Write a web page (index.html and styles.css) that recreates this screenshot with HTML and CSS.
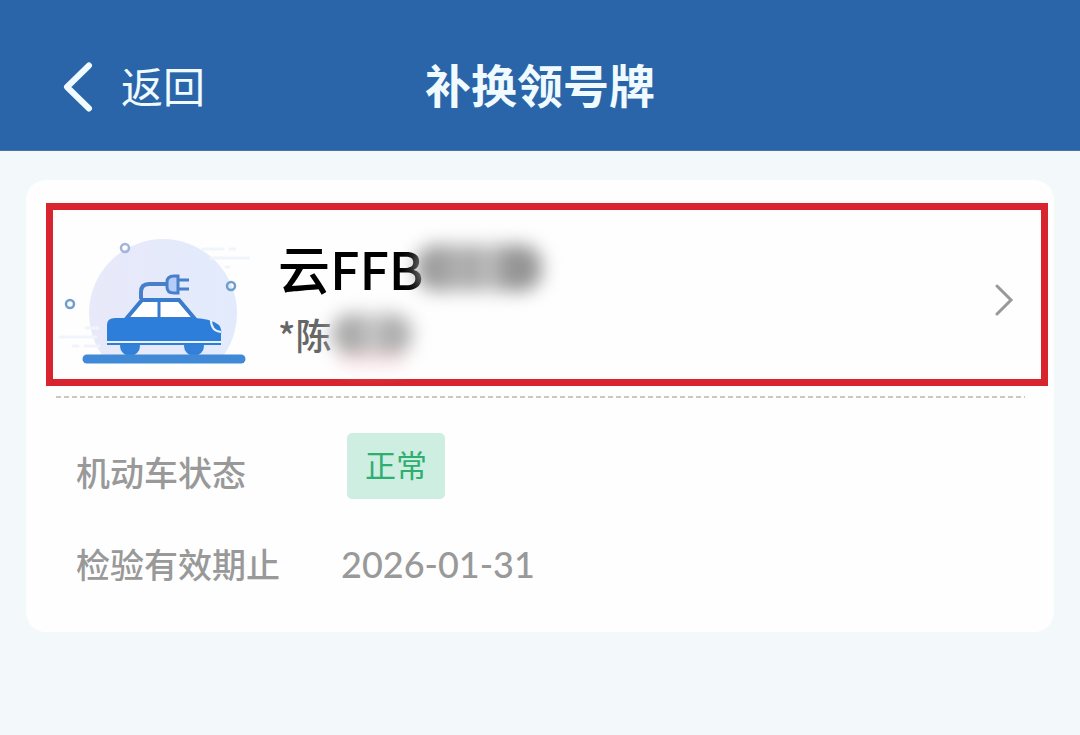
FILE: index.html
```
<!DOCTYPE html>
<html lang="zh-CN">
<head>
    <meta charset="utf-8">
    <meta name="viewport" content="width=device-width, initial-scale=1">
    <title>补换领号牌</title>
    <link rel="stylesheet" href="styles.css">
</head>
<body>
    <header class="topbar">
        <button type="button" class="back">
            <svg width="30" height="50" viewBox="0 0 30 50" aria-hidden="true">
                <path d="M26 3.500L4 25l22 21.500" fill="none" stroke="currentColor" stroke-width="6" stroke-linecap="round" stroke-linejoin="round"/>
            </svg>
            <span>返回</span>
        </button>
        <h1>补换领号牌</h1>
    </header>

    <main class="card">
        <button type="button" class="vehicle">
            <svg class="car" width="194" height="142" viewBox="0 0 194 142" aria-hidden="true">
                <defs>
                    <linearGradient id="sky" x1="0" x2="1">
                        <stop offset="0" stop-color="#e8e9f9"/>
                        <stop offset="1" stop-color="#e2ebfc"/>
                    </linearGradient>
                </defs>
                <path d="M46 132A74 74 0 1 1 168 132z" fill="url(#sky)"/>
                <g stroke="#f0f4fb" stroke-width="3" stroke-linecap="round">
                    <path d="M147 26h20M174 26h5M155 35h38M170 44h3M30 105h12M4 114h36M17 123h5M29 123h14"/>
                </g>
                <g fill="none" stroke-width="2.500">
                    <circle cx="69" cy="25" r="4" stroke="#a3b4dc"/>
                    <circle cx="175" cy="63" r="4" stroke="#6f9fcb"/>
                    <circle cx="14" cy="81" r="4" stroke="#6f9fcb"/>
                </g>
                <path d="M85 76V69q0-8 8-8h19" fill="none" stroke="#497fc9" stroke-width="4"/>
                <path d="M122 57h11M122 66h11" stroke="#497fc9" stroke-width="3"/>
                <path d="M122 53v17h-4q-7 0-7-6v-5q0-6 7-6z" fill="#b3ccfa" stroke="#497fc9" stroke-width="3"/>
                <path d="M70 96L86 77h37l16 19z" fill="#fff" stroke="#397bcd" stroke-width="4"/>
                <path d="M103 77v19" stroke="#397bcd" stroke-width="3"/>
                <circle cx="74" cy="123" r="10" fill="#3380d8"/>
                <circle cx="138" cy="123" r="10" fill="#3380d8"/>
                <path d="M51 122v-20q0-7 8-7h77q18 0 27 7 3 4 2 10v10z" fill="#2d7ddb"/>
                <path d="M51 119h114" stroke="#e9f2ff" stroke-width="2"/>
                <path d="M155 97q0 11 10 12" fill="none" stroke="#e9f2ff" stroke-width="2"/>
                <path d="M31 136h154" stroke="#4089d6" stroke-width="9" stroke-linecap="round"/>
            </svg>
            <span class="info">
                <span class="plate">云FFB<i class="mask"></i></span>
                <span class="owner">*陈<i class="mask"></i></span>
            </span>
            <svg class="arrow" width="20" height="32" viewBox="0 0 20 32" aria-hidden="true">
                <path d="M3 2l14 14L3 30" fill="none" stroke="currentColor" stroke-width="3" stroke-linecap="round"/>
            </svg>
        </button>

        <svg class="divider" width="100%" height="2" aria-hidden="true">
            <line x1="0" y1="1" x2="100%" y2="1" stroke="#cfc6bd" stroke-width="2" stroke-dasharray="5 3"/>
        </svg>

        <dl class="details">
            <dt>机动车状态</dt>
            <dd><span class="badge">正常</span></dd>
            <dt>检验有效期止</dt>
            <dd class="date">2026-01-31</dd>
        </dl>
    </main>
</body>
</html>
```
FILE: styles.css
```
* {
    box-sizing: border-box;
}

body {
    margin: 0;
    background: #f3f8fb;
    font-family: "Noto Sans CJK SC", sans-serif;
    font-weight: 500;
}

button {
    padding: 0;
    border: 0;
    background: none;
    font-family: inherit;
    font-weight: inherit;
    text-align: left;
    cursor: pointer;
}

.topbar {
    display: grid;
    grid-template-columns: 1fr auto 1fr;
    align-items: center;
    height: 151px;
    padding: 24px 63px 0;
    background: #2b65a9;
    border-bottom: 1px solid #4f7297;
    color: #f0fbff;
}

.back {
    display: flex;
    align-items: center;
    gap: 28px;
    color: inherit;
    font-size: 42px;
    font-weight: 400;
    line-height: 46px;
}

.back span {
    padding-bottom: 4px;
}

.topbar h1 {
    margin: 0;
    padding-bottom: 8px;
    font-size: 46px;
    line-height: 50px;
    font-weight: 700;
}

.card {
    margin: 29px 26px;
    padding: 23px 6px 35px 20px;
    border-radius: 20px;
    background: #fefefe;
}

.vehicle {
    display: flex;
    align-items: center;
    width: 100%;
    padding: 13px 27px 3px 3px;
    border: 7px solid #d7242e;
}

.car {
    flex: none;
    align-self: flex-start;
}

.info {
    display: flex;
    flex: 1;
    flex-direction: column;
    margin-left: 28px;
    padding: 10px 0 11px;
}

.plate,
.owner {
    display: flex;
    align-items: center;
}

.plate {
    color: #000;
    font-size: 52px;
    line-height: 70px;
}

.owner {
    color: #666;
    font-size: 36px;
    line-height: 62px;
}

/* hides the rest of the number and the name */
.mask {
    border-radius: 20px;
    filter: blur(9px);
}

.plate .mask {
    width: 126px;
    height: 46px;
    margin-left: -8px;
    background: linear-gradient(90deg, #999, #a3a3a3 25%, #b8b8b8 33%, #a3a3a3 45%, #c4c4c4 57%, #929292 75%, #999);
}

.owner .mask {
    width: 82px;
    height: 40px;
    background: linear-gradient(90deg, #b8b8b8, #a3a3a3 25%, #ccc 50%, #a8a8a8 75%, #bbb);
    box-shadow: 0 18px 0 -6px #fde3e6;
}

.arrow {
    flex: none;
    color: #999;
}

.divider {
    display: block;
    width: calc(100% - 33px);
    margin: 10px 0 0 10px;
}

.details {
    display: grid;
    grid-template-columns: 265px 1fr;
    align-items: center;
    row-gap: 20px;
    margin: 35px 0 0 30px;
    color: #999;
    font-size: 34px;
    line-height: 66px;
}

.details dd {
    margin: 0;
}

.badge {
    display: block;
    width: max-content;
    margin: 0 0 12px 6px;
    padding: 0 18px 4px;
    border-radius: 5px;
    background: #cdeee0;
    color: #2fae72;
    font-size: 31px;
    font-weight: 400;
    line-height: 62px;
}

.details .date {
    font-family: Lato, sans-serif;
    font-size: 36px;
}
```
